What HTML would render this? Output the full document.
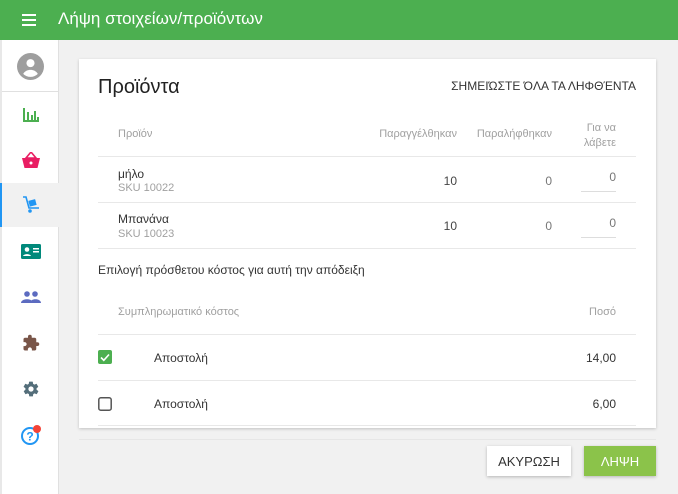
<!DOCTYPE html>
<html><head><meta charset="utf-8"><style>
*{box-sizing:border-box;margin:0;padding:0}
body{width:678px;height:494px;overflow:hidden;background:#f1f1f1;font-family:"Liberation Sans",sans-serif;color:#333;position:relative}
.hdr{position:absolute;left:0;top:0;width:678px;height:40px;background:#4caf50;color:#fff}
.hdr .t{position:absolute;left:58px;top:9px;font-size:17px}
.side{position:absolute;left:0;top:40px;width:59px;height:454px;background:#fff;border-right:1px solid #e0e0e0;border-left:2px solid #e8e8e8}
.ic{position:absolute;left:0;width:57px;height:44px;display:flex;align-items:center;justify-content:center}
.card{position:absolute;left:79px;top:59px;width:577px;height:369px;background:#fff;box-shadow:0 1px 3px rgba(0,0,0,.2)}
.a{position:absolute;white-space:nowrap}
.g{color:#a0a0a0;font-size:11px}
.hl{position:absolute;height:1px;background:#e8e8e8}
.btn{position:absolute;top:446px;height:30px;font-size:13px;display:flex;align-items:center;justify-content:center;box-shadow:0 1px 3px rgba(0,0,0,.25)}
</style></head><body>
<div class="hdr">
<svg style="position:absolute;left:22px;top:14px" width="14" height="12"><rect y="0" width="14" height="2" fill="#fff"/><rect y="5" width="14" height="2" fill="#fff"/><rect y="10" width="14" height="2" fill="#fff"/></svg>
<div class="t">Λήψη στοιχείων/προϊόντων</div></div>
<div class="side">
<div class="ic" style="top:4px"><svg width="27" height="27" viewBox="0 0 24 24"><circle cx="12" cy="12" r="12" fill="#9e9e9e"/><circle cx="12" cy="9" r="3.6" fill="#fff"/><path d="M5.5 18.5c1.5-2.5 4-3.5 6.5-3.5s5 1 6.5 3.5a9 9 0 0 1-13 0z" fill="#fff"/></svg></div>
<div class="hl" style="left:0;top:51px;width:57px;background:#e0e0e0"></div>
<div class="ic" style="top:53px"><svg width="16" height="14"><path d="M0 0h2v14H0zM2 12h14v2H2zM4 4h2v8H4zM8 7h2v5H8zM11 3h2v9h-2zM14 9h2v3h-2z" fill="#4caf50"/></svg></div>
<div class="ic" style="top:98px"><svg width="18" height="16" viewBox="0 0 18 16"><path d="M9 0L4 6h10z" fill="none" stroke="#e91e63" stroke-width="1.6"/><path d="M0 6h18l-2.5 10h-13z" fill="#e91e63"/><circle cx="9" cy="11" r="1.5" fill="#fff"/></svg></div>
<div class="ic" style="top:143px;background:#f1f1f1;left:-2px;width:59px;border-left:2px solid #2196f3"><svg width="18" height="18" viewBox="0 0 18 18"><path d="M1 1h3l3 11h10" fill="none" stroke="#2196f3" stroke-width="1.6"/><rect x="7" y="4" width="7" height="6" fill="#2196f3" transform="rotate(-15 10 7)"/><circle cx="8" cy="15" r="1.8" fill="#2196f3"/></svg></div>
<div class="ic" style="top:189px"><svg width="20" height="15"><rect width="20" height="15" rx="1.5" fill="#00897b"/><circle cx="6" cy="5.5" r="2.3" fill="#fff"/><path d="M2 12c1-2.5 7-2.5 8 0z" fill="#fff"/><rect x="12" y="4" width="6" height="1.5" fill="#fff"/><rect x="12" y="7" width="6" height="1.5" fill="#fff"/></svg></div>
<div class="ic" style="top:235px"><svg width="20" height="12"><circle cx="6" cy="3" r="2.8" fill="#5c6bc0"/><circle cx="14" cy="3" r="2.8" fill="#5c6bc0"/><path d="M0 12c0-5 12-5 12 0zM9 12c0-5 11-5 11 0z" fill="#5c6bc0"/></svg></div>
<div class="ic" style="top:281px"><svg width="18" height="18" viewBox="0 0 24 24"><path d="M20.5 11H19V7c0-1.1-.9-2-2-2h-4V3.5a2.5 2.5 0 0 0-5 0V5H4c-1.1 0-2 .9-2 2v3.8h1.5c1.5 0 2.7 1.2 2.7 2.7S5 16.2 3.5 16.2H2V20c0 1.1.9 2 2 2h3.8v-1.5c0-1.5 1.2-2.7 2.7-2.7s2.7 1.2 2.7 2.7V22H17c1.1 0 2-.9 2-2v-4h1.5a2.5 2.5 0 0 0 0-5z" fill="#795548"/></svg></div>
<div class="ic" style="top:327px"><svg width="18" height="18" viewBox="0 0 24 24"><path d="M19.4 13c.04-.3.1-.7.1-1s-.03-.7-.1-1l2.1-1.6c.2-.15.25-.4.1-.6l-2-3.5c-.1-.2-.4-.3-.6-.2l-2.5 1c-.5-.4-1.1-.7-1.7-1l-.4-2.6c0-.2-.2-.4-.5-.4h-4c-.25 0-.45.2-.5.4l-.4 2.6c-.6.3-1.200.6-1.7 1l-2.5-1c-.2-.1-.5 0-.6.2l-2 3.5c-.1.2-.06.5.1.6L4.6 11c-.04.3-.1.7-.1 1s.03.7.1 1l-2.1 1.6c-.2.15-.25.4-.1.6l2 3.5c.1.2.4.3.6.2l2.5-1c.5.4 1.1.7 1.7 1l.4 2.6c.05.2.25.4.5.4h4c.25 0 .45-.2.5-.4l.4-2.6c.6-.3 1.2-.6 1.7-1l2.5 1c.2.1.5 0 .6-.2l2-3.5c.1-.2.06-.5-.1-.6zM12 15.5A3.5 3.5 0 1 1 12 8.5a3.5 3.5 0 0 1 0 7z" fill="#546e7a"/></svg></div>
<div class="ic" style="top:373px"><svg width="22" height="22" viewBox="0 0 22 22"><circle cx="10" cy="12" r="8" fill="none" stroke="#2196f3" stroke-width="2"/><text x="10" y="16.5" text-anchor="middle" font-size="12" font-weight="bold" fill="#2196f3" font-family="Liberation Sans">?</text><circle cx="17" cy="5" r="4" fill="#f44336"/></svg></div>
</div>
<div class="card">
<div class="a" style="left:19px;top:17px;font-size:20px;color:#222">Προϊόντα</div>
<div class="a" style="right:20px;top:20px;font-size:12px;color:#333">ΣΗΜΕΙΏΣΤΕ ΌΛΑ ΤΑ ΛΗΦΘΈΝΤΑ</div>
<div class="a g" style="left:39px;top:69px">Προϊόν</div>
<div class="a g" style="right:199px;top:69px">Παραγγέλθηκαν</div>
<div class="a g" style="right:104px;top:69px">Παραλήφθηκαν</div>
<div class="a g" style="right:40px;top:62px;text-align:right;line-height:15px">Για να<br>λάβετε</div>
<div class="hl" style="left:19px;width:538px;top:97px"></div>
<div class="a" style="left:39px;top:108px;font-size:12px">μήλο</div>
<div class="a g" style="left:39px;top:123px">SKU 10022</div>
<div class="a" style="right:199px;top:115px;font-size:12px;color:#444">10</div>
<div class="a" style="right:104px;top:115px;font-size:12px;color:#777">0</div>
<div class="a" style="right:40px;top:111px;font-size:12px;color:#777">0</div>
<div class="hl" style="left:502px;width:35px;top:132px;background:#ddd"></div>
<div class="hl" style="left:19px;width:538px;top:143px"></div>
<div class="a" style="left:39px;top:153px;font-size:12px">Μπανάνα</div>
<div class="a g" style="left:39px;top:169px">SKU 10023</div>
<div class="a" style="right:199px;top:160px;font-size:12px;color:#444">10</div>
<div class="a" style="right:104px;top:160px;font-size:12px;color:#777">0</div>
<div class="a" style="right:40px;top:157px;font-size:12px;color:#777">0</div>
<div class="hl" style="left:502px;width:35px;top:178px;background:#ddd"></div>
<div class="hl" style="left:19px;width:538px;top:189px"></div>
<div class="a" style="left:19px;top:204px;font-size:12px">Επιλογή πρόσθετου κόστος για αυτή την απόδειξη</div>
<div class="a g" style="left:39px;top:247px">Συμπληρωματικό κόστος</div>
<div class="a g" style="right:40px;top:247px">Ποσό</div>
<div class="hl" style="left:19px;width:538px;top:275px"></div>
<svg class="a" style="left:19px;top:291px" width="14" height="14"><rect width="14" height="14" rx="2" fill="#4caf50"/><path d="M3 7.5l2.8 2.8L11 4.5" fill="none" stroke="#fff" stroke-width="1.6"/></svg>
<div class="a" style="left:75px;top:292px;font-size:12px">Αποστολή</div>
<div class="a" style="right:40px;top:292px;font-size:12px">14,00</div>
<div class="hl" style="left:19px;width:538px;top:321px"></div>
<svg class="a" style="left:19px;top:338px" width="14" height="14"><rect x=".8" y=".8" width="12.4" height="12.4" rx="2" fill="none" stroke="#555" stroke-width="1.5"/></svg>
<div class="a" style="left:75px;top:338px;font-size:12px">Αποστολή</div>
<div class="a" style="right:40px;top:338px;font-size:12px">6,00</div>
<div class="hl" style="left:19px;width:538px;top:366px"></div>
</div>
<div class="hl" style="left:79px;width:577px;top:439px;background:#e6e6e6"></div>
<div class="btn" style="left:487px;width:84px;background:#fff;color:#333">ΑΚΥΡΩΣΗ</div>
<div class="btn" style="left:584px;width:72px;background:#8bc34a;color:#fff">ΛΗΨΗ</div>
</body></html>
